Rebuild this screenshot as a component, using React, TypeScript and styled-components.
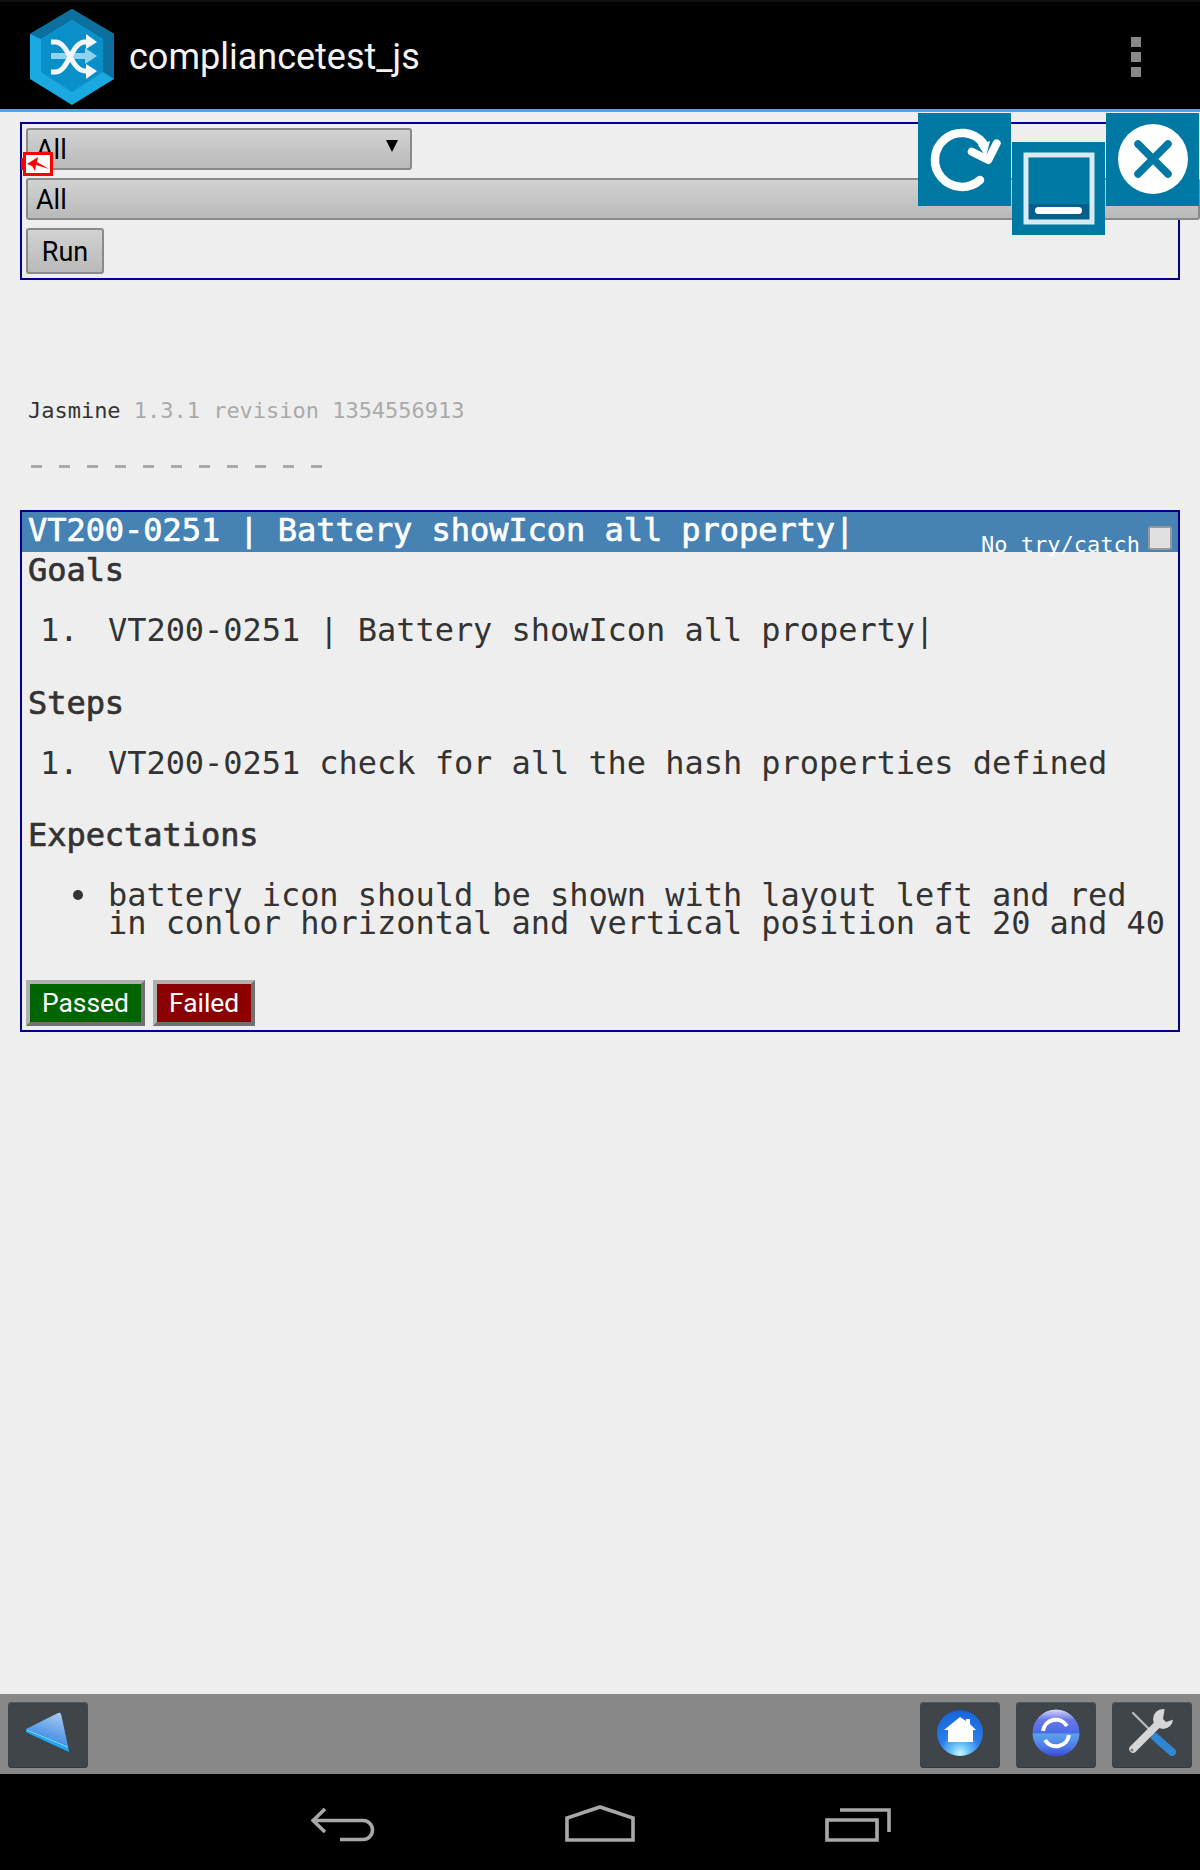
import React from "react";
import styled, { createGlobalStyle } from "styled-components";

const Global = createGlobalStyle`
  html, body { margin: 0; padding: 0; background: #eeeeee; }
  * { box-sizing: border-box; }
`;
const Screen = styled.div`
  position: relative; width: 1200px; height: 1870px; overflow: hidden;
  display: flex; flex-direction: column; background: #eeeeee;
  font-family: Roboto, "Liberation Sans", sans-serif;
`;
const AppBar = styled.header`
  flex: none; height: 112px; background: #000; border-top: 2px solid #101010;
  border-bottom: 3px solid #33b5e5; display: flex; align-items: center;
  padding: 0 59px 0 30px;
`;
const Logo = styled.svg`width: 84px; height: 96px; flex: none; margin-top: 3px;`;
const AppTitle = styled.h1`
  margin: 2px 0 0 15px; flex: 1; font-weight: 400; font-size: 36px; color: #f4f4f4;
`;
const Overflow = styled.div`display: flex; flex-direction: column; gap: 5px; margin-top: 3px;`;
const Dot = styled.span`width: 10px; height: 10px; background: #888;`;
const Main = styled.main`flex: 1; min-height: 0;`;
const Filters = styled.form`
  margin: 10px 20px 0; height: 158px; border: 2px solid #00008b; padding: 4px;
  display: flex; flex-direction: column; align-items: flex-start; gap: 8px;
`;
const Control = styled.div<{ $w: number }>`
  flex: none; width: ${(p) => p.$w}px; height: 42px; border: 2px solid #8a8a8a; border-radius: 3px;
  background: linear-gradient(#d2d2d2, #b9b9b9); display: flex; align-items: center;
  justify-content: space-between; padding: 2px 12px 0 8px; font-size: 27px; color: #000;
`;
const Arrow = styled.span`
  width: 0; height: 0; border-left: 6px solid transparent; border-right: 6px solid transparent;
  border-top: 12px solid #000; margin-bottom: 8px;
`;
const RunButton = styled.button`
  width: 78px; height: 46px; border: 2px solid #8a8a8a; border-radius: 3px; padding: 1px 0 0;
  background: linear-gradient(#d2d2d2, #b9b9b9); font: 400 27px Roboto, sans-serif; color: #000;
`;
const BatteryBadge = styled.svg`position: absolute; left: 21px; top: 152px; width: 32px; height: 24px;`;
const ToolTiles = styled.div`position: absolute; left: 918px; top: 113px; display: flex; gap: 1px; align-items: flex-start;`;
const Tile = styled.svg<{ $drop?: boolean }>`
  width: 93px; height: 93px; display: block; background: #0078a4;
  margin-top: ${(p) => (p.$drop ? "29px" : "0")};
`;
const Mono = `"DejaVu Sans Mono", "Liberation Mono", monospace`;
const Banner = styled.div`
  margin: 117px 0 0 28px; font: 400 22px/28px ${Mono}; color: #333; letter-spacing: -0.02px;
`;
const Version = styled.span`color: #aaa;`;
const Dashes = styled.ul`
  list-style: none; margin: 40px 0 0 31px; padding: 0; display: flex; gap: 17px; height: 4px;
`;
const Dash = styled.li`width: 11px; height: 3px; background: #aaa;`;
const Card = styled.section`
  margin: 41px 20px 0; height: 522px; border: 2px solid #00008b; color: #333;
  font-family: ${Mono}; font-size: 32px;
`;
const CardHead = styled.div`
  height: 40px; background: #4682b4; color: #fff; display: flex; align-items: flex-start;
  padding: 0 6px 0 6px;
`;
const CardTitle = styled.h2`
  margin: 0; flex: 1; font-size: 32px; line-height: 36px; font-weight: 400;
  -webkit-text-stroke: 0.7px currentColor; letter-spacing: -0.05px;
`;
const CatchLabel = styled.label`
  align-self: flex-end; display: flex; align-items: flex-end; gap: 8px;
  font-size: 22px; line-height: 22px; margin-bottom: -4px;
`;
const CatchBox = styled.input`
  appearance: none; margin: 0 0 6px; width: 24px; height: 24px; border: 2px solid #999; border-radius: 3px;
  background: #e0e0e0;
`;
const Heading = styled.h3`
  margin: 0; padding-left: 6px; font-size: 32px; line-height: 36px; font-weight: 400;
  -webkit-text-stroke: 0.7px currentColor; letter-spacing: -0.05px;
`;
const Items = styled.ol`list-style: none; margin: 28px 0 40.5px; padding: 0 0 0 18px; line-height: 28px; letter-spacing: -0.05px;`;
const Item = styled.li`display: flex;`;
const Marker = styled.span`flex: none; width: 68px;`;
const Bullet = styled.span`flex: none; width: 10px; height: 10px; border-radius: 50%; background: #333; margin: 9px 25px 0 33px;`;
const Actions = styled.div`display: flex; gap: 8px; padding-left: 4px; margin-top: 43px;`;
const Verdict = styled.button<{ $c: string }>`
  height: 46px; padding: 0 12px; border: 4px solid; border-color: #b0b0b0 #707070 #707070 #b0b0b0;
  background: ${(p) => p.$c}; color: #fff; font: 400 26.4px Roboto, sans-serif;
`;
const Toolbar = styled.nav`
  flex: none; height: 80px; background: #888; display: flex; justify-content: space-between;
  padding: 8px; align-items: flex-start;
`;
const ToolGroup = styled.div`display: flex; gap: 16px;`;
const ToolButton = styled.div`
  width: 80px; height: 66px; border-radius: 4px; background: #3f4549;
  box-shadow: inset 0 1px 0 #50565a, inset 0 -1px 0 #35393c;
`;
const ToolIcon = styled.svg`width: 80px; height: 66px; display: block; filter: blur(0.6px);`;
const SoftKeys = styled.footer`
  flex: none; height: 96px; background: #000; display: flex; justify-content: center;
  align-items: flex-end; gap: 190px; padding: 0 0 28px 1px;
`;
const KeyIcon = styled.svg`display: block; fill: none; stroke: #a8a8a8; stroke-width: 3.6;`;

export default function App() {
  return (
    <Screen>
      <Global />
      <AppBar>
        <Logo viewBox="30 8 84 96">
          <polygon points="72,8 114,33 114,78 72,104 30,78 30,33" fill="#1ba9e1" />
          <polygon points="30,33 72,8 114,33 114,78 103,71 103,38 72,19 41,38" fill="#0b709f" />
          <polygon points="41,38 72,19 103,38 103,71 72,91 41,71" fill="#0a90c8" />
          <path d="M51 55H88" stroke="#8fd3ee" strokeWidth="6" fill="none" />
          <polygon points="85,47 97,55 85,63" fill="#8fd3ee" />
          <path d="M51 41H55C69 41 71 70 85 70H88" stroke="#f4f8fb" strokeWidth="5" fill="none" />
          <path d="M51 71H55C69 71 71 41 85 41H88" stroke="#f4f8fb" strokeWidth="5" fill="none" />
          <polygon points="86,33 97,41 86,48" fill="#f4f8fb" />
          <polygon points="86,63 97,70 86,78" fill="#f4f8fb" />
        </Logo>
        <AppTitle>compliancetest_js</AppTitle>
        <Overflow><Dot /><Dot /><Dot /></Overflow>
      </AppBar>
      <Main>
        <Filters>
          <Control $w={386}>All<Arrow /></Control>
          <Control $w={1174}>All</Control>
          <RunButton type="button">Run</RunButton>
        </Filters>
        <Banner>Jasmine <Version>1.3.1 revision 1354556913</Version></Banner>
        <Dashes>{Array.from({ length: 11 }, (_, i) => <Dash key={i} />)}</Dashes>
        <Card>
          <CardHead>
            <CardTitle>VT200-0251 | Battery showIcon all property|</CardTitle>
            <CatchLabel>No try/catch<CatchBox type="checkbox" /></CatchLabel>
          </CardHead>
          <Heading>Goals</Heading>
          <Items><Item><Marker>1.</Marker>VT200-0251 | Battery showIcon all property|</Item></Items>
          <Heading>Steps</Heading>
          <Items><Item><Marker>1.</Marker>VT200-0251 check for all the hash properties defined</Item></Items>
          <Heading>Expectations</Heading>
          <Items as="ul">
            <Item><Bullet /><span>battery icon should be shown with layout left and red<br />in conlor horizontal and vertical position at 20 and 40</span></Item>
          </Items>
          <Actions>
            <Verdict type="button" $c="#006400">Passed</Verdict>
            <Verdict type="button" $c="#8b0000">Failed</Verdict>
          </Actions>
        </Card>
      </Main>
      <Toolbar>
        <ToolButton>
          <ToolIcon viewBox="0 0 80 66">
            <defs>
              <linearGradient id="tri" x1="0.7" y1="0" x2="0.3" y2="1">
                <stop offset="0" stopColor="#a4c8f0" />
                <stop offset="0.6" stopColor="#5a9ce8" />
                <stop offset="1" stopColor="#3f8ee6" />
              </linearGradient>
            </defs>
            <path d="M18 27L50 11Q52 10 53 12L60 44L18 27Z" fill="url(#tri)" />
            <polygon points="18,27 60,44 61,50 24,33 18,30" fill="#20a8f8" />
            <path d="M19 28L60 45" stroke="#8fd8fa" strokeWidth="1" />
          </ToolIcon>
        </ToolButton>
        <ToolGroup>
          <ToolButton>
            <ToolIcon viewBox="0 0 80 66">
              <defs>
                <radialGradient id="globe" cx="0.5" cy="0.95" r="1" fx="0.5" fy="0.95">
                  <stop offset="0" stopColor="#c8f4ff" />
                  <stop offset="0.2" stopColor="#6cc4fa" />
                  <stop offset="0.45" stopColor="#2a7ee8" />
                  <stop offset="0.9" stopColor="#1a66de" />
                  <stop offset="1" stopColor="#12409c" />
                </radialGradient>
              </defs>
              <circle cx="40" cy="31" r="23" fill="url(#globe)" />
              <polygon points="40,15 46,19 46,17 50,17 50,22 56,28 53,28 53,40 28,40 28,28 24,28" fill="#fff" />
            </ToolIcon>
          </ToolButton>
          <ToolButton>
            <ToolIcon viewBox="0 0 80 66">
              <defs>
                <linearGradient id="orb" x1="0" y1="0" x2="0" y2="1">
                  <stop offset="0" stopColor="#d4d8f8" />
                  <stop offset="0.22" stopColor="#6a78e8" />
                  <stop offset="0.5" stopColor="#4a6ae8" />
                  <stop offset="0.52" stopColor="#5aa4e8" />
                  <stop offset="0.8" stopColor="#4e78e8" />
                  <stop offset="1" stopColor="#3a48d0" />
                </linearGradient>
              </defs>
              <circle cx="40" cy="31" r="23.5" fill="url(#orb)" />
              <path d="M27 29A13 13 0 0 1 51 24" fill="none" stroke="#fff" strokeWidth="4" />
              <path d="M53 33A13 13 0 0 1 29 38" fill="none" stroke="#fff" strokeWidth="4" />
            </ToolIcon>
          </ToolButton>
          <ToolButton>
            <ToolIcon viewBox="0 0 80 66">
              <path d="M21 11L38 28" stroke="#b8bcc0" strokeWidth="2.2" strokeLinecap="round" />
              <path d="M43 35L60 50" stroke="#2f86d2" strokeWidth="8" strokeLinecap="round" />
              <path d="M21 47L47 21" stroke="#d4d6d8" strokeWidth="7.5" strokeLinecap="round" />
              <circle cx="51" cy="17" r="10" fill="#d4d6d8" />
              <polygon points="51,17 53,5 64,6 63,17 54,20" fill="#3f4549" />
              <circle cx="20" cy="48" r="1.5" fill="#777" />
            </ToolIcon>
          </ToolButton>
        </ToolGroup>
      </Toolbar>
      <SoftKeys>
        <KeyIcon width="64" height="34" viewBox="0 0 64 34">
          <path d="M14 1L2 12.5L14 24M2 12.5H52A9.5 9.5 0 0 1 52 31.5H29" />
        </KeyIcon>
        <KeyIcon width="70" height="37" viewBox="0 0 70 37">
          <path d="M2 35V13L35 2L68 13V35Z" strokeLinejoin="miter" />
        </KeyIcon>
        <KeyIcon width="66" height="34" viewBox="0 0 66 34">
          <path d="M2 12H52V32H2Z" />
          <path d="M15 2H64V24" />
        </KeyIcon>
      </SoftKeys>
      <BatteryBadge viewBox="0 0 32 24">
        <rect x="3.5" y="1.5" width="27" height="21" fill="#fff" stroke="#f00" strokeWidth="3" />
        <rect x="0" y="6" width="3" height="12" fill="#f00" />
        <polygon points="6,12 17,5 16,10 28,17 15,13 14,19 11,14" fill="#f00" />
      </BatteryBadge>
      <ToolTiles>
        <Tile viewBox="0 0 93 93">
          <g style={{ filter: "blur(0.7px)" }}>
            <path d="M62 67A27 27 0 1 1 65 30" fill="none" stroke="#fff" strokeWidth="8.5" strokeLinecap="round" />
            <path d="M53.7 38.7L70.3 47L78.7 30.3" fill="none" stroke="#fff" strokeWidth="8" strokeLinecap="round" strokeLinejoin="round" />
            <polygon points="60,32 72,28 68,44" fill="#fff" />
          </g>
        </Tile>
        <Tile $drop viewBox="0 0 93 93">
          <g style={{ filter: "blur(0.6px)" }}>
            <rect x="14" y="13" width="66" height="67" fill="#045f8e" stroke="#d8ebf2" strokeWidth="5" />
            <rect x="17" y="16" width="60" height="46" fill="#0078a4" />
            <rect x="23" y="65" width="47" height="7" rx="3.5" fill="#fff" />
          </g>
        </Tile>
        <Tile viewBox="0 0 93 93">
          <g style={{ filter: "blur(0.6px)" }}>
            <circle cx="47" cy="46" r="35" fill="#fff" />
            <path d="M32 31L62 61M62 31L32 61" stroke="#0078a4" strokeWidth="7.5" strokeLinecap="round" />
          </g>
        </Tile>
      </ToolTiles>
    </Screen>
  );
}
